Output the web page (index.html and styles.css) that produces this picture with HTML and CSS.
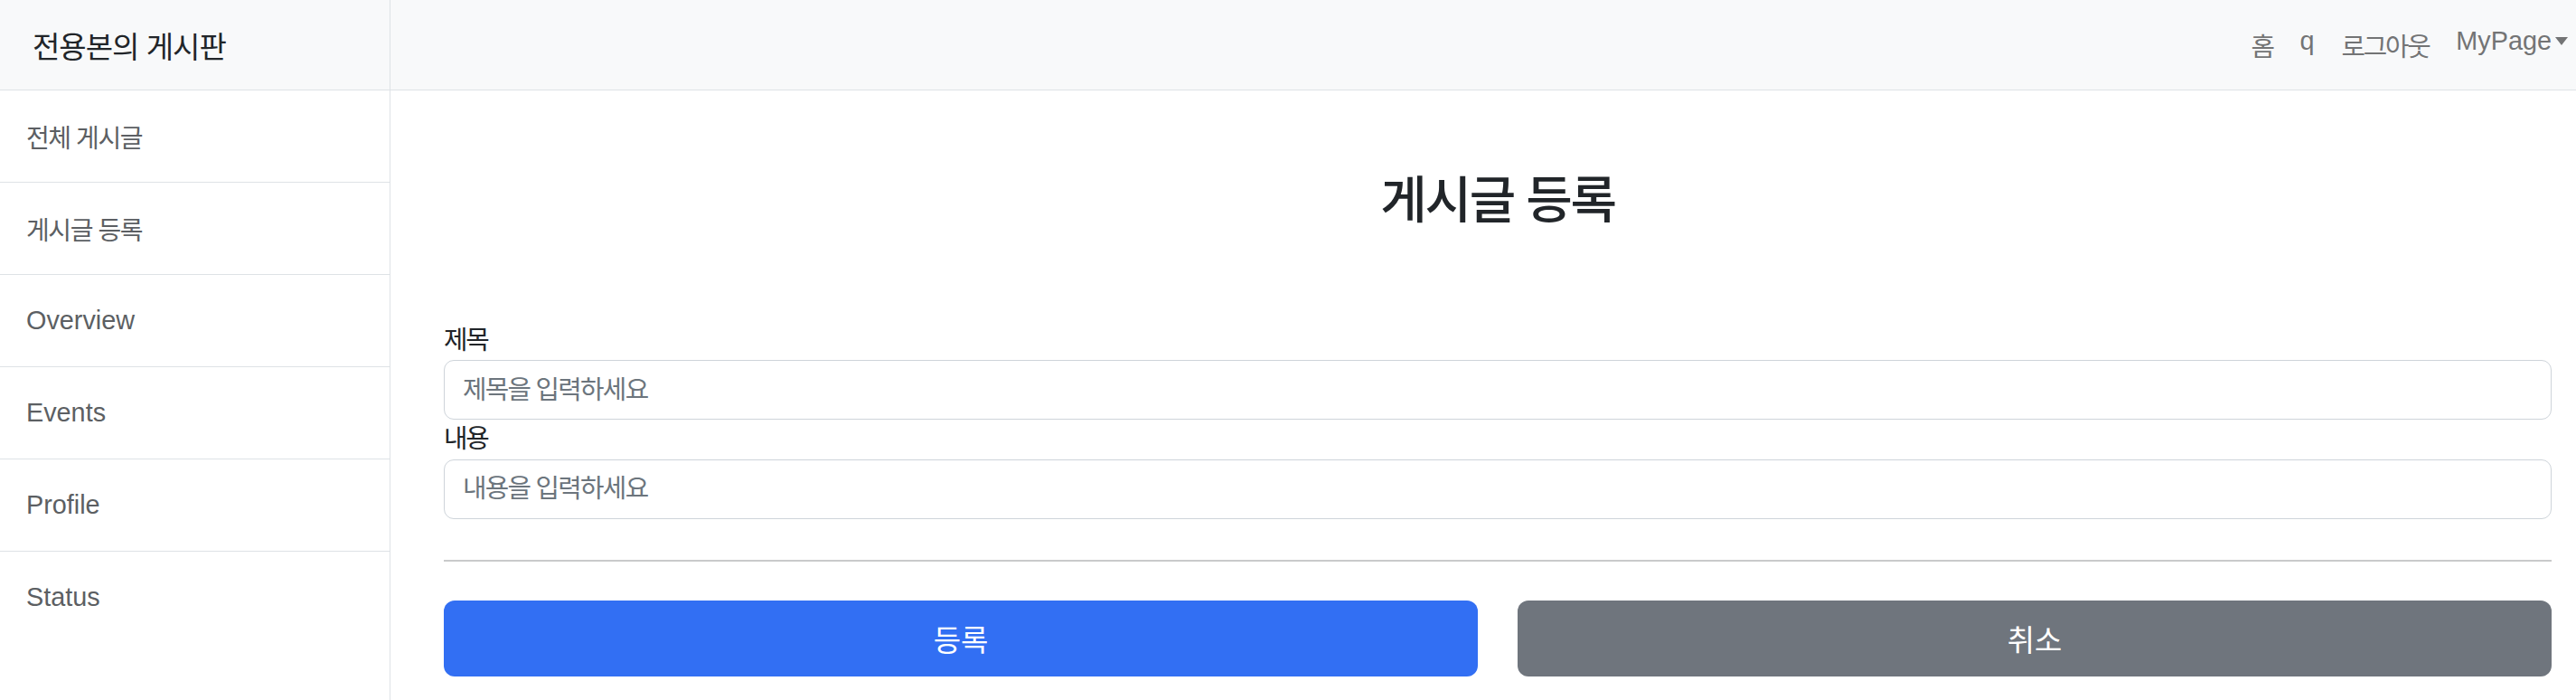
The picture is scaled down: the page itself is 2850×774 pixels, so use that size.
FILE: index.html
```html
<!DOCTYPE html>
<html lang="ko">
<head>
    <meta charset="UTF-8">
    <meta name="viewport" content="width=device-width, initial-scale=1.0">
    <title>게시글 등록</title>
    <link rel="stylesheet" href="styles.css">
</head>
<body>
    <div class="app">
        <aside class="sidebar">
            <div class="sidebar-brand ko">전용본의 게시판</div>
            <nav class="side-list">
                <a href="#" class="side-item ko">전체 게시글</a>
                <a href="#" class="side-item ko">게시글 등록</a>
                <a href="#" class="side-item">Overview</a>
                <a href="#" class="side-item">Events</a>
                <a href="#" class="side-item">Profile</a>
                <a href="#" class="side-item">Status</a>
            </nav>
        </aside>

        <div class="main">
            <header class="topbar">
                <ul class="top-nav">
                    <li><a href="#" class="top-link ko">홈</a></li>
                    <li><a href="#" class="top-link">q</a></li>
                    <li><a href="#" class="top-link ko">로그아웃</a></li>
                    <li><a href="#" class="top-link dropdown-toggle">MyPage</a></li>
                </ul>
            </header>

            <section class="content">
                <h2 class="page-title ko">게시글 등록</h2>

                <form class="post-form">
                    <label for="title" class="form-label ko">제목</label>
                    <input type="text" id="title" class="form-control" placeholder="제목을 입력하세요">

                    <label for="body" class="form-label ko">내용</label>
                    <input type="text" id="body" class="form-control" placeholder="내용을 입력하세요">

                    <hr class="divider">

                    <div class="actions">
                        <button type="submit" class="btn btn-primary">등록</button>
                        <button type="button" class="btn btn-secondary">취소</button>
                    </div>
                </form>
            </section>
        </div>
    </div>
</body>
</html>
```

FILE: styles.css
```css
body {
    margin: 0;
    font-family: 'Liberation Sans', 'Noto Sans CJK KR', sans-serif;
    font-size: 28.8px;
    color: #212529;
    background: #fff;
}

.ko {
    letter-spacing: -0.08em;
}

.app {
    display: flex;
    min-height: 100vh;
}

/* 왼쪽 사이드바 */
.sidebar {
    width: 431px;
    flex-shrink: 0;
    border-right: 1px solid #dee2e6;
}

.sidebar-brand {
    height: 100px;
    box-sizing: border-box;
    display: flex;
    align-items: center;
    padding-left: 36px;
    font-size: 33px;
    color: #212529;
    background-color: #f8f9fa;
    border-bottom: 1px solid #dee2e6;
}

.sidebar-brand.ko {
    letter-spacing: -0.03em;
}

.side-list {
    display: flex;
    flex-direction: column;
}

.side-item {
    height: 101px;
    display: flex;
    align-items: center;
    padding-left: 29px;
    color: #5c5f63;
    text-decoration: none;
    border-bottom: 1px solid #dee2e6;
}

.side-item:last-child {
    border-bottom: none;
}

.side-item.ko {
    font-size: 28px;
    letter-spacing: -0.05em;
}

/* 오른쪽 영역 */
.main {
    flex: 1;
    display: flex;
    flex-direction: column;
}

.topbar {
    height: 99px;
    display: flex;
    justify-content: flex-end;
    align-items: center;
    background-color: #f8f9fa;
    border-bottom: 1px solid #dee2e6;
    padding-right: 9px;
}

.top-nav {
    display: flex;
    list-style: none;
    margin: 0;
    padding: 0;
}

.top-link {
    display: block;
    padding: 0 15px;
    color: #737475;
    text-decoration: none;
}

.top-nav li:last-child .top-link {
    padding-right: 0;
}

.dropdown-toggle::after {
    content: "";
    display: inline-block;
    margin-left: 4px;
    vertical-align: 5px;
    border-top: 9px solid #737475;
    border-left: 7px solid transparent;
    border-right: 7px solid transparent;
}

.content {
    padding: 88px 27px 0 59px;
}

.page-title {
    margin: 0 0 100px;
    text-align: center;
    font-size: 56px;
    font-weight: 500;
    line-height: 1.2;
}

.page-title.ko {
    letter-spacing: -0.04em;
}

.post-form {
    display: flex;
    flex-direction: column;
}

.form-label {
    line-height: 1.5;
    margin-top: 0;
}

.form-control {
    box-sizing: border-box;
    height: 66px;
    padding: 0 20px;
    font-family: inherit;
    font-size: 28.8px;
    letter-spacing: -0.06em;
    color: #212529;
    border: 1px solid #ced4da;
    border-radius: 11px;
    outline: none;
}

.form-control::placeholder {
    color: #6c757d;
}

.divider {
    width: 100%;
    margin: 45px 0 43px;
    border: none;
    border-top: 2px solid #c9cacb;
}

.actions {
    display: grid;
    grid-template-columns: 1fr 1fr;
    gap: 44px;
}

.btn {
    height: 84px;
    border: none;
    border-radius: 12px;
    font-family: inherit;
    font-size: 33px;
    color: #fff;
    cursor: pointer;
}

.btn-primary {
    background-color: #326ff3;
}

.btn-secondary {
    background-color: #6f757d;
}
```
